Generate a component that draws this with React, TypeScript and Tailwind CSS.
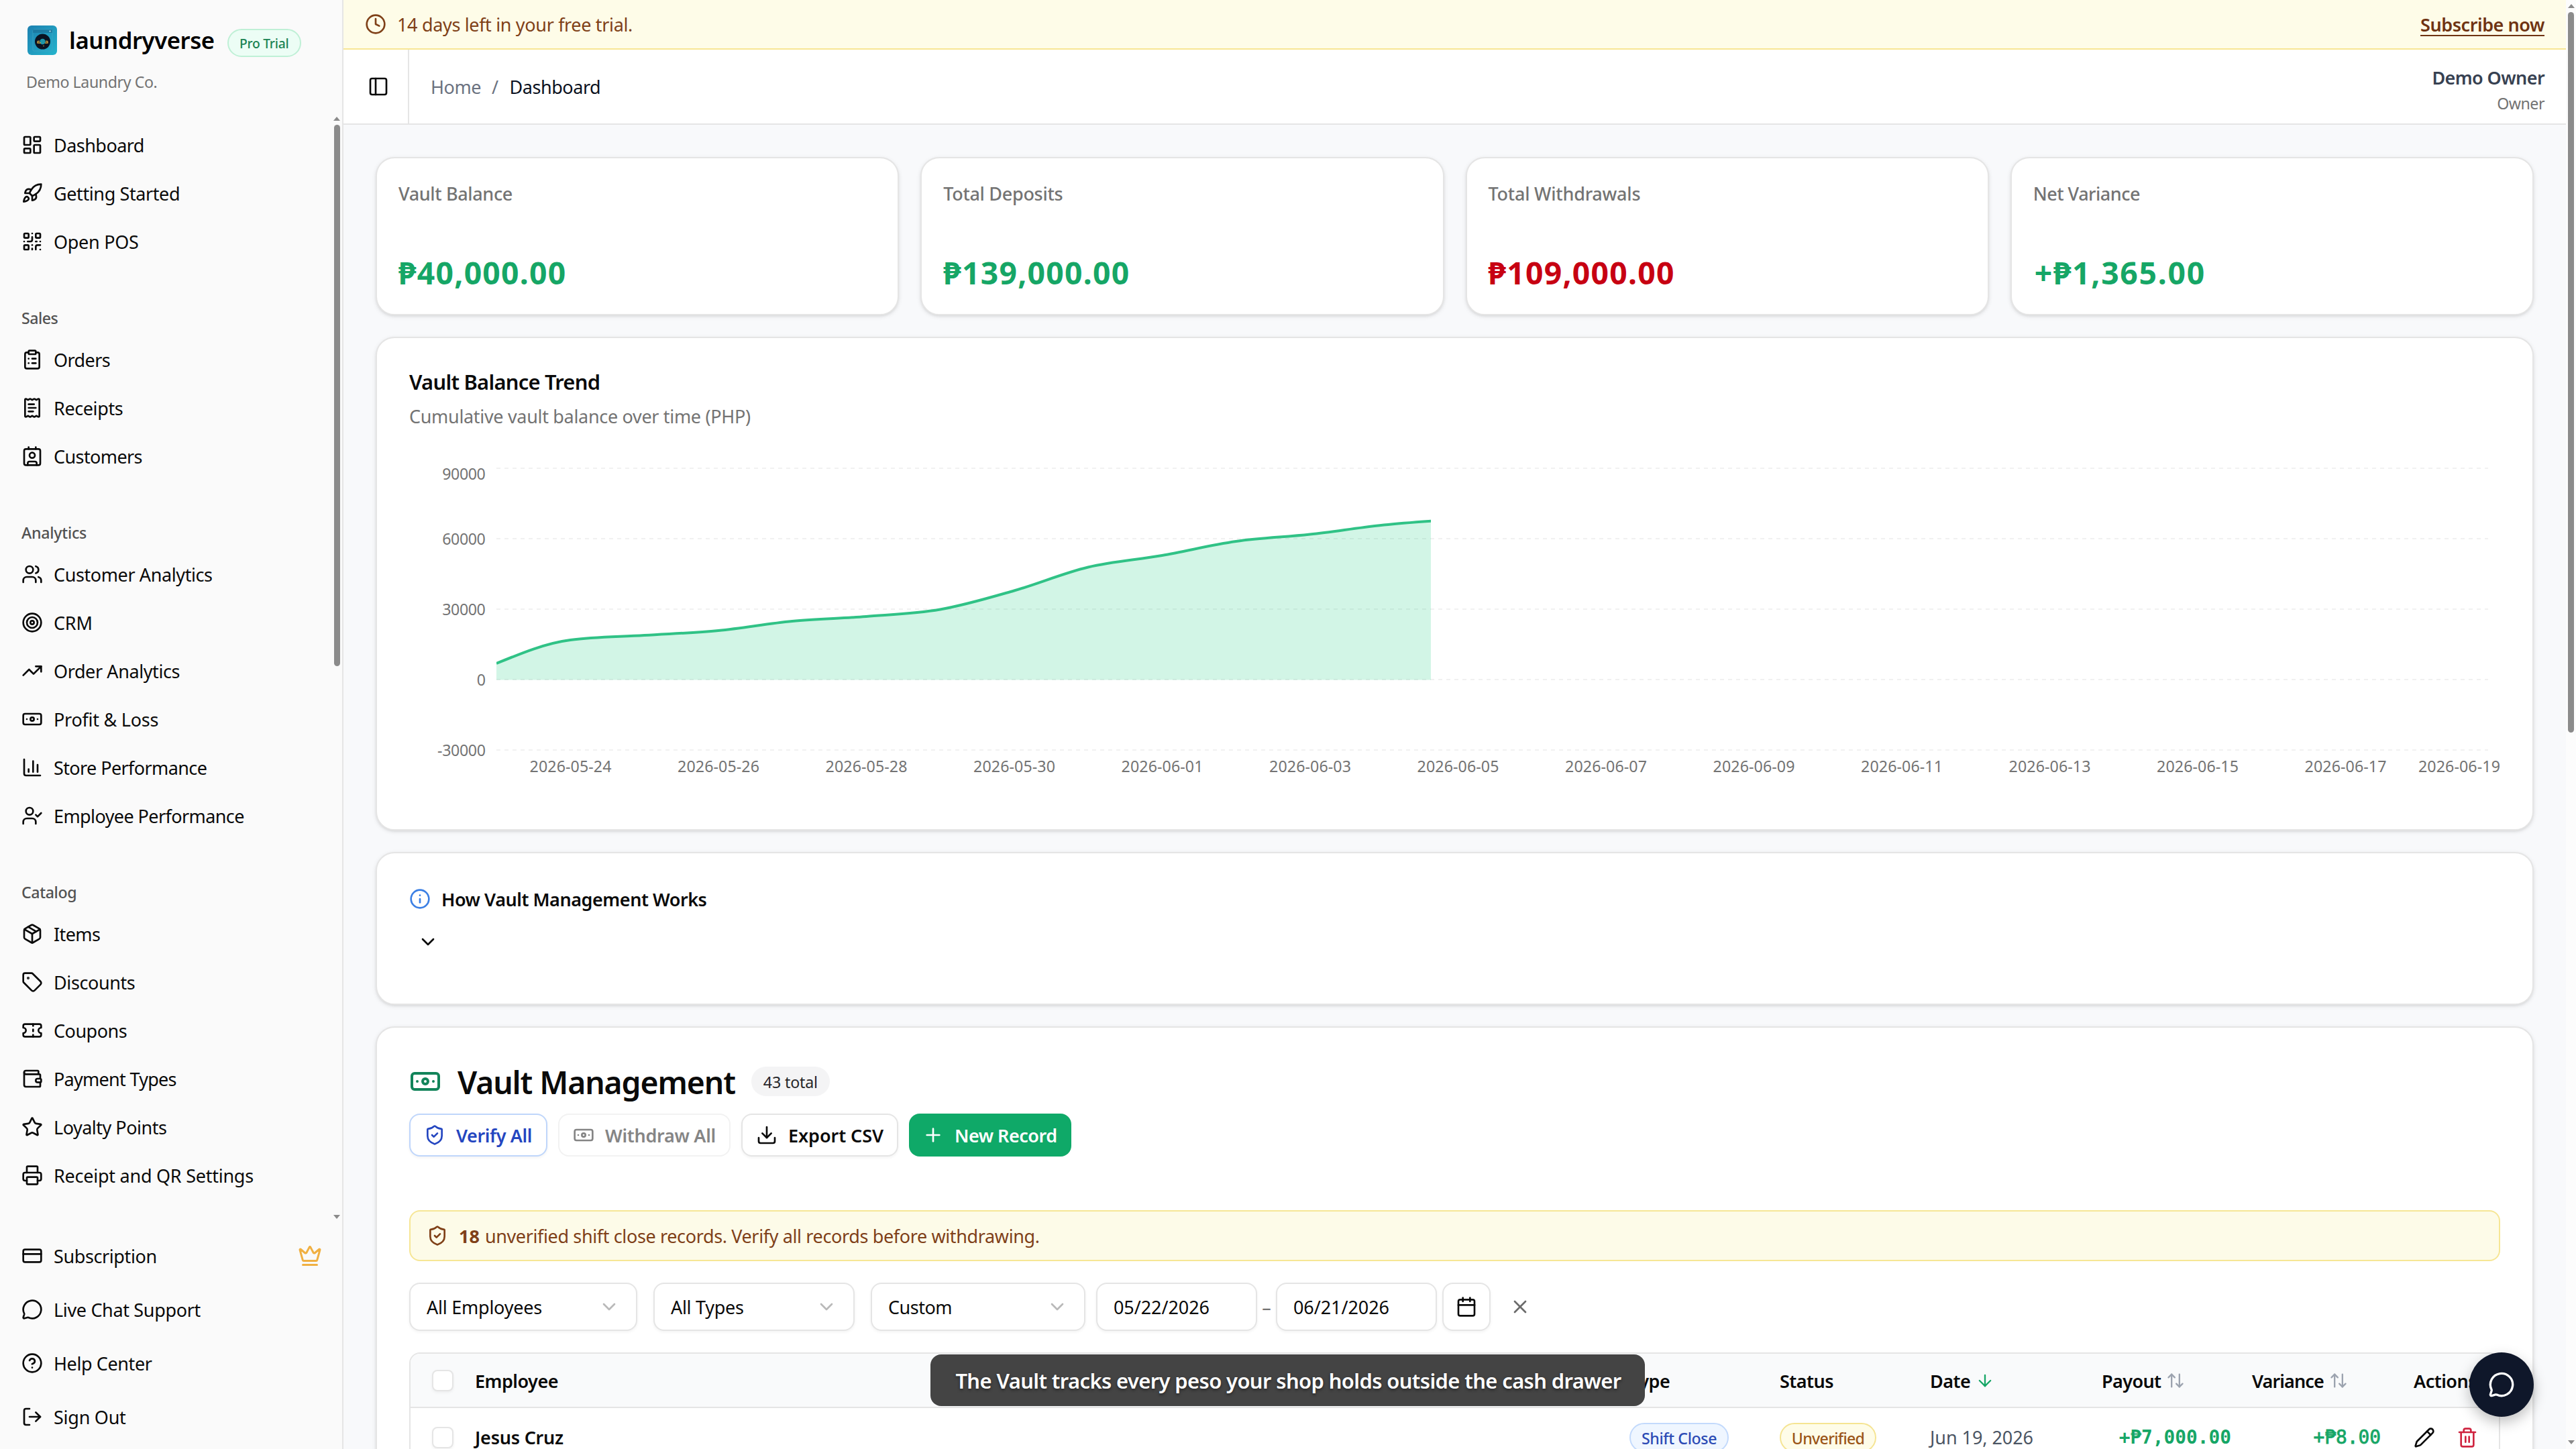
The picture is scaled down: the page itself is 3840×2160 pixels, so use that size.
import type { ReactNode } from 'react'
import {
  ArrowDown, ArrowDownUp, Banknote, Calendar, ChevronDown, CircleQuestionMark, ClipboardList, Clock,
  CreditCard, Crown, Download, Info, LayoutDashboard, LogOut, MessageCircle, Package, PanelLeft,
  Pencil, Plus, Printer, QrCode, ReceiptText, Rocket, ShieldCheck, Star, Tag, Target, Trash2,
  TrendingUp, UserCheck, Users, Wallet, X,
} from 'lucide-react'

type IconType = typeof Users

function LogoMark() {
  return (
    <svg viewBox="0 0 44 44" className="size-11 shrink-0">
      <defs>
        <linearGradient id="logo" x1="0" y1="0" x2="1" y2="1">
          <stop offset="0" stopColor="#1c80b0" />
          <stop offset="1" stopColor="#25b4cc" />
        </linearGradient>
      </defs>
      <rect width="44" height="44" rx="6" fill="url(#logo)" />
      <rect x="8" y="6" width="29" height="32" rx="2" fill="none" stroke="#3fa3c4" strokeWidth="0.8" />
      <rect x="8" y="6" width="29" height="5" fill="#196c93" fillOpacity="0.6" />
      <circle cx="33.5" cy="8.5" r="1" fill="#d8f3f8" />
      <circle cx="22.5" cy="24" r="11.5" fill="#0a1322" />
      <circle cx="22.5" cy="24" r="4.2" fill="#1d96a8" />
      <path d="M15 23.5v2.5h5M30 23.5v2.5h-4M15 23.5h3M27 23.5h3" stroke="#d0a23f" strokeWidth="1.4" fill="none" />
      <circle cx="24" cy="30.5" r="0.8" fill="#d0a23f" />
    </svg>
  )
}

function StoreBars(props: { className?: string }) {
  return (
    <svg viewBox="0 0 24 24" fill="none" stroke="currentColor" strokeWidth="2" strokeLinecap="round" strokeLinejoin="round" className={props.className}>
      <path d="M3 3v16a2 2 0 0 0 2 2h16" />
      <path d="M13 17V5" />
      <path d="M18 17V9" />
      <path d="M8 17v-3" />
    </svg>
  )
}

function CouponIcon(props: { className?: string }) {
  return (
    <svg viewBox="0 0 24 24" fill="none" stroke="currentColor" strokeWidth="2" strokeLinecap="round" strokeLinejoin="round" className={props.className}>
      <path d="M2 9a3 3 0 0 1 0 6v2a2 2 0 0 0 2 2h16a2 2 0 0 0 2-2v-2a3 3 0 0 1 0-6V7a2 2 0 0 0-2-2H4a2 2 0 0 0-2 2Z" />
      <path d="M13 5v2" />
      <path d="M13 17v2" />
      <path d="M13 11v2" />
    </svg>
  )
}

function PersonCard(props: { className?: string }) {
  return (
    <svg viewBox="0 0 24 24" fill="none" stroke="currentColor" strokeWidth="2" strokeLinecap="round" strokeLinejoin="round" className={props.className}>
      <path d="M16 2v2" />
      <path d="M7 22v-2a2 2 0 0 1 2-2h6a2 2 0 0 1 2 2v2" />
      <path d="M8 2v2" />
      <circle cx="12" cy="11" r="3" />
      <rect x="3" y="4" width="18" height="18" rx="2" />
    </svg>
  )
}

type NavEntry = [string, IconType | typeof StoreBars, string]

const mainNav: NavEntry[] = [
  ['Dashboard', LayoutDashboard, 'tracking-[-0.54px]'],
  ['Getting Started', Rocket, 'tracking-[-0.4px]'],
  ['Open POS', QrCode, 'tracking-[-0.3px]'],
]
const groups: { label: string; track: string; items: NavEntry[] }[] = [
  {
    label: 'Sales',
    track: 'tracking-[-0.5px]',
    items: [
      ['Orders', ClipboardList, 'tracking-[-0.6px]'],
      ['Receipts', ReceiptText, 'tracking-[-0.4px]'],
      ['Customers', PersonCard, 'tracking-[-0.6px]'],
    ],
  },
  {
    label: 'Analytics',
    track: 'tracking-[-0.24px]',
    items: [
      ['Customer Analytics', Users, 'tracking-[-0.4px]'],
      ['CRM', Target, 'tracking-[-0.2px]'],
      ['Order Analytics', TrendingUp, 'tracking-[-0.4px]'],
      ['Profit & Loss', Banknote, 'tracking-[-0.25px]'],
      ['Store Performance', StoreBars, 'tracking-[-0.6px]'],
      ['Employee Performance', UserCheck, 'tracking-[-0.59px]'],
    ],
  },
  {
    label: 'Catalog',
    track: 'tracking-[-0.4px]',
    items: [
      ['Items', Package, 'tracking-[-0.6px]'],
      ['Discounts', Tag, 'tracking-[-0.4px]'],
      ['Coupons', CouponIcon, 'tracking-[-0.5px]'],
      ['Payment Types', Wallet, 'tracking-[-0.72px]'],
      ['Loyalty Points', Star, 'tracking-[-0.5px]'],
      ['Receipt and QR Settings', Printer, 'tracking-[-0.25px]'],
    ],
  },
]
const footerNav: NavEntry[] = [
  ['Subscription', CreditCard, 'tracking-[-0.4px]'],
  ['Live Chat Support', MessageCircle, 'tracking-[-0.34px]'],
  ['Help Center', CircleQuestionMark, 'tracking-[-0.4px]'],
  ['Sign Out', LogOut, 'tracking-[-0.25px]'],
]

function NavItem({ entry, children }: { entry: NavEntry; children?: ReactNode }) {
  const [label, Icon, track] = entry
  return (
    <div className="flex h-16 items-center gap-4 pr-[30px] pl-8 text-[27px] text-[#0a0a0a]">
      <Icon className="size-8 shrink-0" />
      <span className={`pt-[3px] ${track}`}>{label}</span>
      {children}
    </div>
  )
}

function ArrowTip({ down }: { down?: boolean }) {
  return (
    <svg viewBox="0 0 10 6" className="h-[6px] w-[10px]">
      <path d={down ? 'M0 0h10L5 6z' : 'M0 6h10L5 0z'} fill="#8a8a8a" />
    </svg>
  )
}

function Sidebar() {
  return (
    <aside className="flex h-full w-[512px] shrink-0 flex-col border-r-2 border-[#e5e5e5] bg-[#fafafa]">
      <div className="flex h-[172px] shrink-0 flex-col pt-[38px]">
        <div className="flex h-11 items-center pl-[41px]">
          <LogoMark />
          <span className="ml-[18px] text-[34.7px] leading-[44px] font-semibold tracking-[-0.43px] text-black">laundryverse</span>
          <span className="mt-[8px] ml-[19px] flex h-[42px] w-[110px] items-center justify-center rounded-full border-2 border-[#bff0d6] bg-[#ecfdf5] pt-[2px] text-[19.3px] font-medium tracking-[-0.25px] text-[#1b8354]">
            Pro Trial
          </span>
        </div>
        <span className="mt-[22px] pl-[39px] text-[23.2px] leading-[36px] tracking-[-0.43px] text-[#737373]">Demo Laundry Co.</span>
      </div>
      <div className="flex h-[1652px] shrink-0">
        <nav className="flex grow flex-col gap-12 overflow-hidden pt-3">
          <div className="flex flex-col gap-2">
            {mainNav.map((e) => (
              <NavItem key={e[0]} entry={e} />
            ))}
          </div>
          {groups.map((g) => (
            <div key={g.label} className="flex flex-col">
              <div className={`flex h-16 items-center pt-[4px] pl-8 text-[23.2px] font-medium text-[#525252] ${g.track}`}>{g.label}</div>
              <div className="flex flex-col gap-2">
                {g.items.map((e) => (
                  <NavItem key={e[0]} entry={e} />
                ))}
              </div>
            </div>
          ))}
        </nav>
        <div className="flex w-4 shrink-0 flex-col items-center justify-between pt-[2px] pb-[7px]">
          <div className="flex flex-col items-center gap-[6px]">
            <ArrowTip />
            <div className="h-[807px] w-[9px] rounded-full bg-[#8b8b8b]" />
          </div>
          <ArrowTip down />
        </div>
      </div>
      <div className="flex flex-col gap-4 pt-4">
        {footerNav.map((e) => (
          <NavItem key={e[0]} entry={e}>
            {e[0] === 'Subscription' && <Crown className="ml-auto size-9 text-[#f0b042]" />}
          </NavItem>
        ))}
      </div>
    </aside>
  )
}

function Card({ className, children }: { className: string; children: ReactNode }) {
  return (
    <section className={`flex shrink-0 flex-col rounded-[28px] border-2 border-[#e5e5e5] bg-white shadow-[0_2px_6px_rgba(0,0,0,0.1),0_2px_4px_-2px_rgba(0,0,0,0.1)] ${className}`}>
      {children}
    </section>
  )
}

const stats = [
  { label: 'Vault Balance', value: '₱40,000.00', cls: 'text-[#16a666]', track: 'tracking-[-0.36px]', vt: 'tracking-[1.25px]' },
  { label: 'Total Deposits', value: '₱139,000.00', cls: 'text-[#16a666]', track: 'tracking-[-0.3px]', vt: 'tracking-[1.25px]' },
  { label: 'Total Withdrawals', value: '₱109,000.00', cls: 'text-[#c70012]', track: 'tracking-[-0.22px]', vt: 'tracking-[1.25px]' },
  { label: 'Net Variance', value: '+₱1,365.00', cls: 'pl-[2px] text-[#16a666]', track: 'tracking-[-0.5px]', vt: 'tracking-[1.7px]' },
]

const DAY = 110.25
const X0 = 130
const balances = [7000, 17000, 19000, 21000, 25000, 27000, 30000, 38000, 48000, 53000, 59000, 62000, 66000, 68500]
const yOf = (v: number) => 372.5 - (v / 30000) * 105

// Monotone cubic interpolation through the daily balances.
function monotonePath(values: number[]) {
  const pts = values.map((v, i) => [X0 + i * DAY, yOf(v)])
  const n = pts.length
  const slope = pts.slice(1).map((p, i) => (p[1] - pts[i][1]) / DAY)
  const tan = pts.map((_, i) => {
    if (i === 0 || i === n - 1) return slope[Math.min(i, n - 2)]
    const a = slope[i - 1]
    const b = slope[i]
    return -2 * Math.min(Math.abs(a), Math.abs(b), 0.25 * Math.abs(a + b))
  })
  tan[0] = (3 * slope[0] - tan[1]) / 2
  let d = `M${pts[0][0]},${pts[0][1]}`
  for (let i = 1; i < n; i++) {
    const h = DAY / 3
    const [x0, y0] = pts[i - 1]
    const [x1, y1] = pts[i]
    d += `C${x0 + h},${y0 + tan[i - 1] * h} ${x1 - h},${y1 - tan[i] * h} ${x1},${y1}`
  }
  return d
}

const xLabels = ['05-24', '05-26', '05-28', '05-30', '06-01', '06-03', '06-05', '06-07', '06-09', '06-11', '06-13', '06-15', '06-17', '06-19']

function TrendChart() {
  const line = monotonePath(balances)
  const lastX = X0 + (balances.length - 1) * DAY
  return (
    <svg viewBox="0 0 3117 550" className="h-[550px] w-[3117px] shrink-0">
      <defs>
        <clipPath id="reveal">
          <rect x={X0} y="0" width="1393" height="550" />
        </clipPath>
      </defs>
      {[90000, 60000, 30000, 0, -30000].map((v) => (
        <g key={v}>
          <line x1={X0} x2="3099" y1={yOf(v) - 0.5} y2={yOf(v) - 0.5} stroke="#f1f1f1" strokeWidth="2" strokeDasharray="6 6" />
          <text x="113.5" y={v === 90000 ? 74 : yOf(v) + 8.5} textAnchor="end" className="fill-[#737373] text-[23.2px] tracking-[-0.4px]">
            {v}
          </text>
        </g>
      ))}
      <g clipPath="url(#reveal)">
        <path d={`${line}L${lastX},${yOf(0)}L${X0},${yOf(0)}Z`} fill="#1fcb84" fillOpacity="0.2" />
        <path d={line} fill="none" stroke="#30c286" strokeWidth="4" />
      </g>
      {xLabels.map((l, i) => (
        <text key={l} x={i === 13 ? 3056 : 240.6 + i * 220.5} y="509.5" textAnchor="middle" className="fill-[#737373] text-[23.2px] tracking-[0.1px]">
          {`2026-${l}`}
        </text>
      ))}
    </svg>
  )
}

function Select({ label, width, track }: { label: string; width: string; track: string }) {
  return (
    <div className={`flex h-[72px] items-center justify-between rounded-2xl border-2 border-[#e5e5e5] bg-white pr-[24px] pl-6 text-[27px] text-[#0a0a0a] shadow-[0_2px_4px_rgba(0,0,0,0.05)] ${width}`}>
      <span className={`pt-[3px] ${track}`}>{label}</span>
      <ChevronDown className="size-8 text-[#b9b9b9]" />
    </div>
  )
}

function DateBox({ value }: { value: string }) {
  return (
    <div className="flex h-[72px] w-[240px] items-center rounded-2xl border-2 border-[#e5e5e5] bg-white pt-[3px] pl-6 text-[27px] tracking-[-0.07px] text-[#0a0a0a] shadow-[0_2px_4px_rgba(0,0,0,0.05)]">
      {value}
    </div>
  )
}

function Checkbox() {
  return <div className="size-8 rounded-lg border-2 border-[#e5e5e5] bg-white shadow-[0_2px_4px_rgba(0,0,0,0.05)]" />
}

const columns = 'grid grid-cols-[96px_1721px_224px_224px_256px_224px_241px_1fr]'

function VaultTable() {
  return (
    <div className="flex h-[240px] shrink-0 flex-col overflow-hidden rounded-t-2xl border-2 border-[#e5e5e5]">
      <div className={`h-[81px] shrink-0 items-center border-b-2 border-[#e5e5e5] bg-[#f9fafb] text-[27px] font-semibold text-[#0a0a0a] ${columns}`}>
        <div className="pl-8">
          <Checkbox />
        </div>
        <span className="pt-[3px] tracking-[-0.51px]">Employee</span>
        <span className="pt-[3px] tracking-[-0.5px]">Type</span>
        <span className="pt-[3px] tracking-[-0.5px]">Status</span>
        <div className="flex items-center gap-[8px]">
          <span className="pt-[3px] tracking-[-0.5px]">Date</span>
          <ArrowDown className="size-7 text-[#16a666]" />
        </div>
        <div className="flex items-center gap-[8px]">
          <span className="pt-[3px] tracking-[-0.6px]">Payout</span>
          <ArrowDownUp className="size-7 -scale-x-100 text-[#9ca3af]" />
        </div>
        <div className="flex items-center gap-[8px]">
          <span className="pt-[3px] tracking-[-0.89px]">Variance</span>
          <ArrowDownUp className="size-7 -scale-x-100 text-[#9ca3af]" />
        </div>
        <span className="pt-[3px] tracking-[-0.5px]">Actions</span>
      </div>
      <div className={`h-[88px] shrink-0 items-center text-[27px] text-[#0a0a0a] ${columns}`}>
        <div className="pl-8">
          <Checkbox />
        </div>
        <span className="font-semibold tracking-[-0.23px]">Jesus Cruz</span>
        <div className="flex h-11 w-[148px] items-center justify-center rounded-full border-2 border-[#c3dafc] bg-[#eff6ff] pt-[2px] text-[23.2px] font-medium tracking-[-0.39px] text-[#2c4bb5]">
          Shift Close
        </div>
        <div className="flex h-11 w-[144px] items-center justify-center rounded-full border-2 border-[#f5e492] bg-[#fefce8] pt-[2px] text-[23.2px] font-medium tracking-[-0.7px] text-[#9a5518]">
          Unverified
        </div>
        <span className="tracking-[-0.06px] text-[#4b5563]">Jun 19, 2026</span>
        <div className="w-[193px] text-right font-['DejaVu_Sans_Mono'] text-[27.8px] font-bold text-[#16a666]">+₱7,000.00</div>
        <div className="w-[192px] text-right font-['DejaVu_Sans_Mono'] text-[27.8px] text-[#16a666] [-webkit-text-stroke:0.8px]">+₱8.00</div>
        <div className="flex items-center gap-8">
          <Pencil className="size-8 text-[#0a0a0a]" />
          <Trash2 className="size-8 text-[#cf2440]" />
        </div>
      </div>
    </div>
  )
}

const button = 'flex h-16 items-center rounded-2xl text-[27px] font-semibold'

export default function App() {
  return (
    <div className="relative flex h-[2160px] w-[3840px] overflow-hidden bg-white font-['Noto_Sans','Open_Sans',sans-serif]">
      <Sidebar />
      <div className="flex w-[3313px] shrink-0 flex-col bg-[#f8f9fb]">
        <div className="flex h-[74px] shrink-0 items-center border-b-2 border-[#f8e694] bg-[#fefce8] pr-8 pl-8 text-[27px] text-[#7f4018]">
          <Clock className="size-8" />
          <span className="ml-4 pt-[3px] tracking-[-0.34px]">14 days left in your free trial.</span>
          <span className="mt-[3px] ml-auto border-b-2 border-[#6f3312] text-[27px] leading-[31px] font-semibold tracking-[-0.44px] text-[#6f3312]">Subscribe now</span>
        </div>
        <header className="flex h-[112px] shrink-0 items-center border-b-2 border-[#e5e5e5] bg-white pr-8">
          <div className="flex h-full w-[98px] items-center border-r-2 border-[#e5e5e5] pl-9">
            <PanelLeft className="size-8 text-[#0a0a0a]" />
          </div>
          <div className="flex pt-[3px] pl-8 text-[27px] tracking-[-0.46px]">
            <span className="text-[#6b7280]">Home</span>
            <span className="ml-4 text-[#6b7280]">/</span>
            <span className="ml-[17px] text-[#0b1120]">Dashboard</span>
          </div>
          <div className="mt-[10px] ml-auto flex flex-col items-end">
            <span className="text-[27px] leading-[40px] font-semibold tracking-[-0.6px] text-[#374151]">Demo Owner</span>
            <span className="text-[23.2px] leading-[36px] tracking-[-0.5px] text-[#737373]">Owner</span>
          </div>
        </header>
        <main className="flex grow flex-col gap-8 p-12">
          <div className="grid shrink-0 grid-cols-4 gap-8">
            {stats.map((s) => (
              <Card key={s.label} className="h-[236px] px-8 pt-[33px]">
                <span className={`text-[27px] leading-[40px] font-medium text-[#737373] ${s.track}`}>{s.label}</span>
                <span className={`mt-[66px] text-[46.3px] leading-[64px] font-bold ${s.cls} ${s.vt}`}>{s.value}</span>
              </Card>
            ))}
          </div>

          <Card className="h-[736px] pt-12 pl-12">
            <span className="text-[30.9px] leading-[34px] font-semibold tracking-[-0.75px] text-[#0a0a0a]">Vault Balance Trend</span>
            <span className="mt-[15px] text-[27px] leading-[40px] tracking-[-0.32px] text-[#737373]">Cumulative vault balance over time (PHP)</span>
            <TrendChart />
          </Card>

          <Card className="h-[228px] pt-12 pl-12">
            <div className="flex h-10 items-center gap-4">
              <Info className="size-8 text-[#3b7fe4]" />
              <span className="pt-[2px] text-[27px] font-semibold tracking-[-0.46px] text-[#0a0a0a]">How Vault Management Works</span>
            </div>
            <div className="mt-4 flex size-14 items-center justify-center">
              <ChevronDown className="size-8 text-[#0a0a0a]" />
            </div>
          </Card>

          <Card className="h-[900px] px-12 pt-12">
            <div className="flex h-16 items-center">
              <Banknote className="size-12 text-[#12845a]" />
              <span className="ml-6 pt-[4px] text-[46.3px] leading-[64px] font-semibold tracking-[-1.1px] text-[#0a0a0a]">Vault Management</span>
              <span className="ml-[24px] flex h-11 w-[117px] items-center justify-center rounded-full bg-[#f4f4f5] pt-[2px] text-[23.2px] tracking-[-0.15px] text-[#27272a]">43 total</span>
            </div>
            <div className="mt-4 flex gap-4">
              <div className={`w-[206px] border-2 border-[#bfd6fb] bg-white pl-[20px] text-[#2446c0] shadow-[0_2px_4px_rgba(0,0,0,0.05)] ${button}`}>
                <ShieldCheck className="size-8" />
                <span className="ml-4 pt-[2px] tracking-[-0.4px]">Verify All</span>
              </div>
              <div className={`w-[257px] border-2 border-[#f2f2f2] bg-white pl-[20px] text-[#858585] ${button}`}>
                <Banknote className="size-8" />
                <span className="ml-4 pt-[2px] tracking-[-0.28px]">Withdraw All</span>
              </div>
              <div className={`w-[234px] border-2 border-[#e5e5e5] bg-white pl-[20px] text-[#0a0a0a] shadow-[0_2px_4px_rgba(0,0,0,0.05)] ${button}`}>
                <Download className="size-8" />
                <span className="ml-4 pt-[2px] tracking-[-0.06px]">Export CSV</span>
              </div>
              <div className={`w-[242px] bg-[#0fa968] pl-[20px] text-white ${button}`}>
                <Plus className="size-8" />
                <span className="ml-4 pt-[2px] tracking-[-0.5px]">New Record</span>
              </div>
            </div>
            <div className="mt-20 flex h-[76px] shrink-0 items-center rounded-2xl border-2 border-[#f6e695] bg-[#fdfbe8] pl-6 text-[27px] text-[#7f4018]">
              <ShieldCheck className="size-8" />
              <span className="ml-4 pt-[3px] font-bold">18</span>
              <span className="ml-[8px] pt-[3px] tracking-[-0.37px]">unverified shift close records. Verify all records before withdrawing.</span>
            </div>
            <div className="mt-8 flex shrink-0 items-center">
              <Select label="All Employees" width="w-[340px]" track="tracking-[-0.24px]" />
              <div className="w-6" />
              <Select label="All Types" width="w-[300px]" track="tracking-[-0.3px]" />
              <div className="w-6" />
              <Select label="Custom" width="w-[320px]" track="tracking-[-0.5px]" />
              <div className="w-4" />
              <DateBox value="05/22/2026" />
              <span className="w-[28px] pt-[3px] text-center text-[27px] text-[#737373]">–</span>
              <DateBox value="06/21/2026" />
              <div className="ml-2 flex size-[72px] items-center justify-center rounded-2xl border-2 border-[#e5e5e5] bg-white shadow-[0_2px_4px_rgba(0,0,0,0.05)]">
                <Calendar className="size-8 text-[#0a0a0a]" />
              </div>
              <X className="ml-[28px] size-8 text-[#6b6b6b]" />
            </div>
            <div className="mt-8 flex flex-col">
              <VaultTable />
            </div>
          </Card>
        </main>
      </div>
      <div className="flex w-[15px] shrink-0 flex-col items-center bg-[#fcfcfc] pt-[6px]">
        <ArrowTip />
        <div className="mt-[6px] h-[1074px] w-[9px] rounded-full bg-[#8b8b8b]" />
        <div className="mt-auto mb-[7px] flex">
          <ArrowTip down />
        </div>
      </div>
      <div className="absolute top-[2019px] left-[1387px] flex h-[77px] w-[1065px] items-center justify-center rounded-2xl bg-[#444444] pt-[2px] pl-[2px] text-[30.9px] font-semibold tracking-[-0.59px] whitespace-nowrap text-white [text-shadow:0_2px_4px_rgba(0,0,0,0.5)]">
        The Vault tracks every peso your shop holds outside the cash drawer
      </div>
      <div className="absolute top-[2016px] left-[3681px] flex size-24 items-center justify-center rounded-full bg-[#0f172a] shadow-[0_8px_20px_rgba(0,0,0,0.25)]">
        <MessageCircle className="size-10 text-white" />
      </div>
    </div>
  )
}
